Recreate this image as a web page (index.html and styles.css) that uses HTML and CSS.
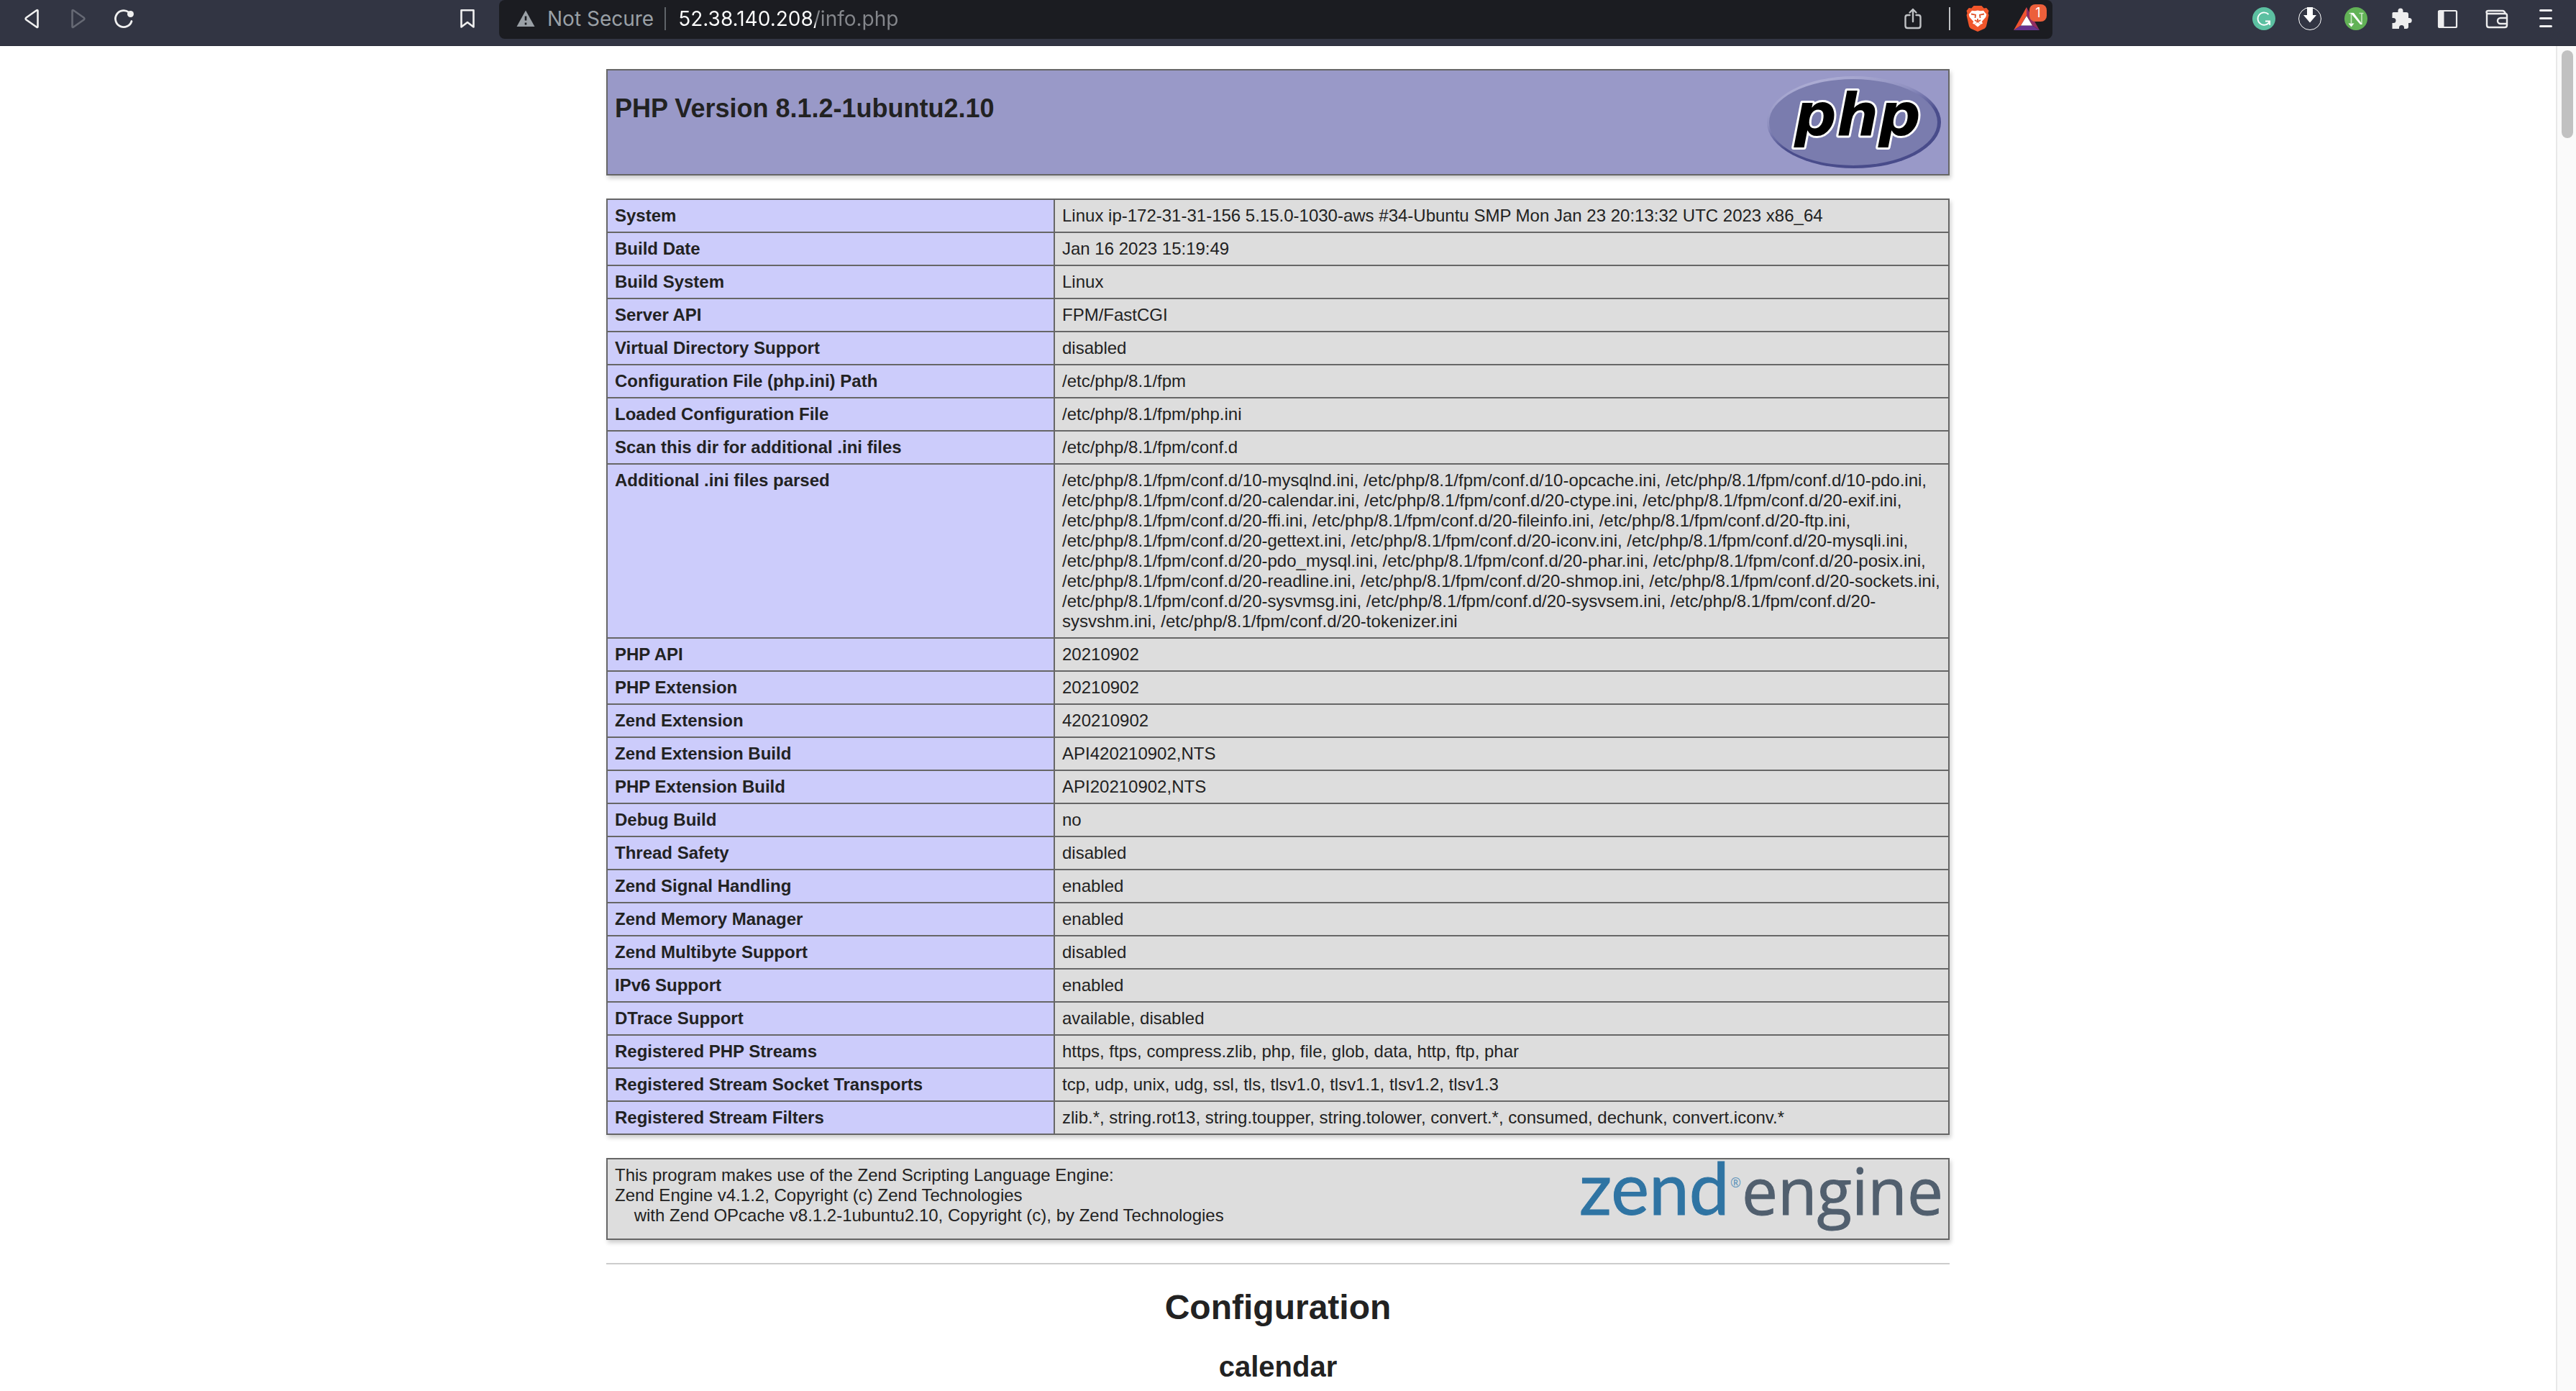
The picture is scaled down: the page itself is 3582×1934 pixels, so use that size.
FILE: index.html
```html
<!DOCTYPE html>
<html lang="en">
<head>
<meta charset="utf-8">
<title>PHP 8.1.2-1ubuntu2.10 - phpinfo()</title>
<link rel="stylesheet" href="styles.css">
</head>
<body>
<header class="toolbar">
  <nav class="toolbar-nav" aria-label="Navigation">
    <button class="tool" type="button" aria-label="Back"><svg viewBox="0 0 32 32"><path d="M24.500 5v22q0 1.500-1.400.8L8.500 17.500q-1.800-1.500 0-3L23 4.300q1.500-.8 1.500.7z" fill="none" stroke="#f0f0f0" stroke-width="2.600" stroke-linejoin="round"/></svg></button>
    <button class="tool" type="button" aria-label="Forward" disabled><svg viewBox="0 0 32 32"><path d="M8.500 5v22q0 1.500 1.400.8l14.600-10.300q1.800-1.500 0-3L10 4.300Q8.500 3.500 8.500 5z" fill="none" stroke="#666974" stroke-width="2.600" stroke-linejoin="round"/></svg></button>
    <button class="tool" type="button" aria-label="Reload"><svg viewBox="0 0 32 32"><path d="M27 19.500A11.500 11.500 0 1 1 23 7" fill="none" stroke="#f0f0f0" stroke-width="2.800" stroke-linecap="round"/><circle cx="25.500" cy="9.500" r="4.500" fill="#f0f0f0"/></svg></button>
    <button class="tool tool-end" type="button" aria-label="Bookmark this page"><svg viewBox="0 0 32 32"><path d="M7.500 4.300h17v23.200l-8.500-6.500-8.500 6.500z" fill="none" stroke="#f0f0f0" stroke-width="2.600" stroke-linejoin="round"/></svg></button>
  </nav>
  <div class="address">
    <svg class="warning" viewBox="0 0 26 24"><path d="M13 0.500L25.500 23H.5z" fill="#9aa0a6"/><path d="M13 8.500v6M13 17.500v3" stroke="#1b1c21" stroke-width="2.600"/></svg>
    <label class="security" for="url">Not Secure</label>
    <span class="rule"></span>
    <input class="url" id="url" type="text" value="52.38.140.208/info.php" spellcheck="false">
    <div class="actions">
      <button class="tool" type="button" aria-label="Share"><svg viewBox="0 0 32 32"><path d="M11.500 11H8.500q-3 0-3 3v12q0 3 3 3h15q3 0 3-3V14q0-3-3-3h-3M16 20V3M11.500 7.500L16 3l4.500 4.500" fill="none" stroke="#bfc1c4" stroke-width="2.400" stroke-linejoin="round" stroke-linecap="round"/></svg></button>
      <span class="rule rule-light"></span>
      <button class="tool tall" type="button" aria-label="Brave Shields"><svg viewBox="0 0 32 36"><path d="M10.500 0h11l3.200 3.500 3.500-.5L31.500 7l-1 3.500L31.500 13l-3.500 15.500q-.7 2-2.500 3.200L16 36l-9.500-4.300Q4.700 30.500 4 28.500L.5 13l1-2.500L.5 7 3.800 3l3.500.5z" fill="#f1562b"/><path d="M16 6.500l4 .8 4-.6 4.300 5.300-1 3.700-5.500 6.300 1.200 2.500-2.300 1.300-4.700-3.500-4.700 3.500L9 24.500l1.200-2.500-5.500-6.300-1-3.700L8 6.700l4 .6z" fill="#fff"/><path d="M16 23l4.500 2.700L16 29.500l-4.500-3.800z" fill="#fff"/><path d="M7 11.500l6 1.200-.5 4.300M25 11.500l-6 1.200.5 4.300M12 20l4 2.300 4-2.300M16 18v4" fill="none" stroke="#e0542c" stroke-width="1.800"/></svg></button>
      <button class="tool rewards" type="button" aria-label="Brave Rewards, 1 notification"><svg viewBox="0 0 36 32"><path d="M18 0L0 32l10-6.500 8-14z" fill="#ef5230"/><path d="M18 0l18 32-10-6.500-8-14z" fill="#932d63"/><path d="M0 32h36l-10-6.500H10z" fill="#66348f"/><path d="M18 12l8 13.500H10z" fill="#fff"/></svg><span class="badge">1</span></button>
    </div>
  </div>
  <div class="extensions">
    <button class="tool" type="button" aria-label="Grammarly"><svg viewBox="0 0 32 32"><circle cx="16" cy="16" r="16" fill="#5cc0a1"/><path d="M22.500 10A8.700 8.700 0 1 0 24 20M18 19.500h6.200V25M24 20l-3 3.500" fill="none" stroke="#fff" stroke-width="1.800"/></svg></button>
    <button class="tool" type="button" aria-label="Downloader"><svg viewBox="0 0 32 32"><circle cx="16" cy="16" r="15.500" fill="none" stroke="#fff"/><path d="M12 0h8v11h5l-9 10.500L7 11h5z" fill="#fff"/></svg></button>
    <button class="tool" type="button" aria-label="Nimbus"><svg viewBox="0 0 32 32"><circle cx="16" cy="16" r="16" fill="#62b256"/><path d="M9.500 22V8.500M24 23V8.500M6.500 8.500h6M20.500 8.500h6" fill="none" stroke="#c9e6c4" stroke-width="1.600"/><path d="M8.500 8h4.500L25 24h-3z" fill="#fff"/><path d="M5.500 22.500h8l-4 5z" fill="#fff"/></svg></button>
    <button class="tool" type="button" aria-label="Extensions"><svg viewBox="0 0 32 32"><path d="M4 7h6.500V5a3.500 3.500 0 0 1 7 0v2H22q3 0 3 3v5h1.200a3.500 3.500 0 0 1 0 7H25v5q0 3-3 3h-3v-1.500a3.500 3.500 0 0 0-7 0V30H2.500v-8H4a3.500 3.500 0 0 0 0-7H2.500V8.500Q2.500 7 4 7z" fill="#ededee"/></svg></button>
    <button class="tool" type="button" aria-label="Side panel"><svg viewBox="0 0 32 32"><rect x="3" y="5" width="25" height="23" rx="1.500" fill="none" stroke="#ededee" stroke-width="2.200"/><path d="M2 5h8.500v23H2z" fill="#ededee"/></svg></button>
    <button class="tool wide" type="button" aria-label="Wallet"><svg viewBox="0 0 32 32"><path d="M2 9v16q0 3 3 3h22q3 0 3-3V11.500Q30 9 27.500 9H3.500Q1.500 9 1.500 7T4 5h20q2.500 0 4 4M30 15h-9a3.500 3.500 0 0 0 0 8h9" fill="none" stroke="#ededee" stroke-width="2.400"/></svg></button>
    <button class="tool wide" type="button" aria-label="Menu"><svg viewBox="0 0 32 32"><path d="M8.500 4.500h15M8.500 15.500h15M8.500 26.500h15" stroke="#f0f0f0" stroke-width="3" stroke-linecap="round"/></svg></button>
  </div>
</header>

<div class="viewport">
<main class="page">
  <section class="box title-box">
    <h1 class="version">PHP Version 8.1.2-1ubuntu2.10</h1>
    <svg class="php-logo" viewBox="0 0 242 128" role="img" aria-label="PHP logo">
      <defs><linearGradient id="rim" x1="0.200" y1="0" x2="0.700" y2="1"><stop offset="0" stop-color="#b3b3d8"/><stop offset="0.350" stop-color="#8f90c0"/><stop offset="0.600" stop-color="#4a4d8c"/><stop offset="1" stop-color="#484b8a"/></linearGradient></defs>
      <ellipse cx="121" cy="64" rx="121" ry="64" fill="url(#rim)"/>
      <ellipse cx="120" cy="64" rx="117" ry="60" fill="#7a7cae"/>
      <text class="php-word" x="38" y="82">php</text>
    </svg>
  </section>

  <table class="box info">
    <tbody>
      <tr><th scope="row">System</th><td>Linux ip-172-31-31-156 5.15.0-1030-aws #34-Ubuntu SMP Mon Jan 23 20:13:32 UTC 2023 x86_64</td></tr>
      <tr><th scope="row">Build Date</th><td>Jan 16 2023 15:19:49</td></tr>
      <tr><th scope="row">Build System</th><td>Linux</td></tr>
      <tr><th scope="row">Server API</th><td>FPM/FastCGI</td></tr>
      <tr><th scope="row">Virtual Directory Support</th><td>disabled</td></tr>
      <tr><th scope="row">Configuration File (php.ini) Path</th><td>/etc/php/8.1/fpm</td></tr>
      <tr><th scope="row">Loaded Configuration File</th><td>/etc/php/8.1/fpm/php.ini</td></tr>
      <tr><th scope="row">Scan this dir for additional .ini files</th><td>/etc/php/8.1/fpm/conf.d</td></tr>
      <tr><th scope="row">Additional .ini files parsed</th><td>/etc/php/8.1/fpm/conf.d/10-mysqlnd.ini, /etc/php/8.1/fpm/conf.d/10-opcache.ini, /etc/php/8.1/fpm/conf.d/10-pdo.ini, /etc/php/8.1/fpm/conf.d/20-calendar.ini, /etc/php/8.1/fpm/conf.d/20-ctype.ini, /etc/php/8.1/fpm/conf.d/20-exif.ini, /etc/php/8.1/fpm/conf.d/20-ffi.ini, /etc/php/8.1/fpm/conf.d/20-fileinfo.ini, /etc/php/8.1/fpm/conf.d/20-ftp.ini, /etc/php/8.1/fpm/conf.d/20-gettext.ini, /etc/php/8.1/fpm/conf.d/20-iconv.ini, /etc/php/8.1/fpm/conf.d/20-mysqli.ini, /etc/php/8.1/fpm/conf.d/20-pdo_mysql.ini, /etc/php/8.1/fpm/conf.d/20-phar.ini, /etc/php/8.1/fpm/conf.d/20-posix.ini, /etc/php/8.1/fpm/conf.d/20-readline.ini, /etc/php/8.1/fpm/conf.d/20-shmop.ini, /etc/php/8.1/fpm/conf.d/20-sockets.ini, /etc/php/8.1/fpm/conf.d/20-sysvmsg.ini, /etc/php/8.1/fpm/conf.d/20-sysvsem.ini, /etc/php/8.1/fpm/conf.d/20-sysvshm.ini, /etc/php/8.1/fpm/conf.d/20-tokenizer.ini</td></tr>
      <tr><th scope="row">PHP API</th><td>20210902</td></tr>
      <tr><th scope="row">PHP Extension</th><td>20210902</td></tr>
      <tr><th scope="row">Zend Extension</th><td>420210902</td></tr>
      <tr><th scope="row">Zend Extension Build</th><td>API420210902,NTS</td></tr>
      <tr><th scope="row">PHP Extension Build</th><td>API20210902,NTS</td></tr>
      <tr><th scope="row">Debug Build</th><td>no</td></tr>
      <tr><th scope="row">Thread Safety</th><td>disabled</td></tr>
      <tr><th scope="row">Zend Signal Handling</th><td>enabled</td></tr>
      <tr><th scope="row">Zend Memory Manager</th><td>enabled</td></tr>
      <tr><th scope="row">Zend Multibyte Support</th><td>disabled</td></tr>
      <tr><th scope="row">IPv6 Support</th><td>enabled</td></tr>
      <tr><th scope="row">DTrace Support</th><td>available, disabled</td></tr>
      <tr><th scope="row">Registered PHP Streams</th><td>https, ftps, compress.zlib, php, file, glob, data, http, ftp, phar</td></tr>
      <tr><th scope="row">Registered Stream Socket Transports</th><td>tcp, udp, unix, udg, ssl, tls, tlsv1.0, tlsv1.1, tlsv1.2, tlsv1.3</td></tr>
      <tr><th scope="row">Registered Stream Filters</th><td>zlib.*, string.rot13, string.toupper, string.tolower, convert.*, consumed, dechunk, convert.iconv.*</td></tr>
    </tbody>
  </table>

  <section class="box engine-box">
    <p class="engine-text">This program makes use of the Zend Scripting Language Engine:<br>Zend Engine v4.1.2, Copyright (c) Zend Technologies<br>&nbsp;&nbsp;&nbsp;&nbsp;with Zend OPcache v8.1.2-1ubuntu2.10, Copyright (c), by Zend Technologies</p>
    <svg class="zend-logo" viewBox="0 0 500 94" role="img" aria-label="Zend Engine logo">
      <text class="zend-word" x="-3" y="69">zend</text>
      <text class="zend-mark" x="207" y="31">®</text>
      <text class="engine-word" x="223" y="69">engine</text>
    </svg>
  </section>

  <hr class="divider">
  <h1 class="heading">Configuration</h1>
  <h2 class="module">calendar</h2>
</main>
<div class="scrollbar" aria-hidden="true"><div class="thumb"></div></div>
</div>
</body>
</html>
```

FILE: styles.css
```css
* {
  box-sizing: border-box;
}

body {
  margin: 0;
  min-height: 100vh;
  display: flex;
  flex-direction: column;
  background: #fff;
  color: #222;
  font-family: "Liberation Sans", Arial, Helvetica, sans-serif;
}

/* Browser toolbar */
.toolbar {
  display: grid;
  grid-template-columns: 694fr 2160fr 728fr;
  align-items: start;
  height: 64px;
  background: #323543;
  border-bottom: 1px solid #292b38;
  font-family: Inter, "Liberation Sans", sans-serif;
}

.toolbar-nav,
.extensions {
  display: flex;
  align-items: center;
  gap: 32px;
  height: 52px;
}

.toolbar-nav {
  padding: 0 28px;
}

.tool-end {
  margin-left: auto;
}

.extensions {
  justify-content: flex-end;
  padding-right: 26px;
}

.tool {
  flex: none;
  width: 32px;
  height: 32px;
  padding: 0;
  border: 0;
  background: none;
}

.tool svg {
  display: block;
  width: 100%;
  height: 100%;
}

.tall {
  height: 36px;
}

.wide {
  margin-left: 4px;
}

.address {
  display: flex;
  align-items: center;
  height: 54px;
  padding: 0 18px 2px 24px;
  border-radius: 8px;
  background: #1b1c21;
}

.warning {
  width: 26px;
  height: 24px;
  margin-right: 17px;
}

.security {
  color: #9aa0a6;
  font-size: 28px;
  line-height: 32px;
  white-space: nowrap;
}

.rule {
  width: 2px;
  height: 32px;
  margin: 0 17px 0 15px;
  background: #5f6368;
}

.url {
  flex: 1;
  min-width: 0;
  height: 40px;
  padding: 0;
  border: 0;
  outline: 0;
  background: linear-gradient(90deg, #fff 191px, #85878c 191px);
  -webkit-background-clip: text;
  background-clip: text;
  color: transparent;
  font: 28px/40px Inter, "Liberation Sans", sans-serif;
}

.actions {
  display: flex;
  align-items: center;
}

.rule-light {
  margin: 0 22px 0 34px;
  background: #bfc1c4;
}

.rewards {
  position: relative;
  width: 36px;
  margin-left: 34px;
}

.badge {
  position: absolute;
  top: -4px;
  right: -10px;
  width: 24px;
  height: 24px;
  border-radius: 8px;
  background: #ec5f3b;
  color: #fff;
  font: 18px/24px Inter, "Liberation Sans", sans-serif;
  text-align: center;
}

/* Page area and its scrollbar */
.viewport {
  flex: 1;
  display: flex;
}

.page {
  flex: 1;
  display: flex;
  flex-direction: column;
  align-items: center;
  padding-top: 32px;
}

.scrollbar {
  width: 28px;
  padding: 6px 4px 6px 6px;
  border-left: 2px solid #e8e8e8;
  background: #fafafa;
}

.thumb {
  width: 16px;
  height: 122px;
  border-radius: 8px;
  background: #c1c1c1;
}

/* phpinfo boxes */
.box {
  width: 1868px;
  max-width: 100%;
  margin-bottom: 32px;
  border: 2px solid #666;
  box-shadow: 2px 4px 6px rgba(0, 0, 0, 0.2);
}

.title-box,
.engine-box {
  display: flex;
  justify-content: space-between;
  align-items: flex-start;
  padding: 8px 10px;
}

.title-box {
  background: #9999c8;
}

.version {
  margin: 24px 0;
  font-size: 36px;
  line-height: 41px;
}

.php-logo {
  width: 242px;
  height: 128px;
}

.php-word {
  fill: #000;
  stroke: #fff;
  stroke-width: 6px;
  stroke-linejoin: round;
  paint-order: stroke;
  font: italic bold 82px "DejaVu Sans", sans-serif;
}

.info {
  table-layout: fixed;
  border-collapse: collapse;
  font-size: 24px;
  line-height: 28px;
}

.info th,
.info td {
  padding: 8px 10px;
  border: 2px solid #666;
  text-align: left;
  vertical-align: baseline;
}

.info th {
  width: 622px;
  background: #ccccfb;
}

.info td {
  background: #ddd;
  overflow-wrap: break-word;
}

.engine-box {
  background: #ddd;
}

.engine-text {
  margin: 0;
  font-size: 24px;
  line-height: 28px;
}

.zend-logo {
  width: 500px;
  height: 94px;
  overflow: visible;
}

.zend-word {
  fill: #2f74a3;
  stroke: #2f74a3;
  stroke-width: 1px;
  font: 100px Lato, sans-serif;
}

.zend-mark {
  fill: #5f95bb;
  font: 18px "Open Sans", sans-serif;
}

.engine-word {
  fill: #515f6e;
  stroke: #515f6e;
  stroke-width: 1px;
  font: 89px "Open Sans", sans-serif;
}

.divider {
  width: 1868px;
  max-width: 100%;
  height: 2px;
  margin: 0;
  border: 0;
  background: #ccc;
}

.heading {
  margin: 32px 0;
  font-size: 48px;
  line-height: 55px;
}

.module {
  margin: 0;
  font-size: 40px;
  line-height: 46px;
}
```
